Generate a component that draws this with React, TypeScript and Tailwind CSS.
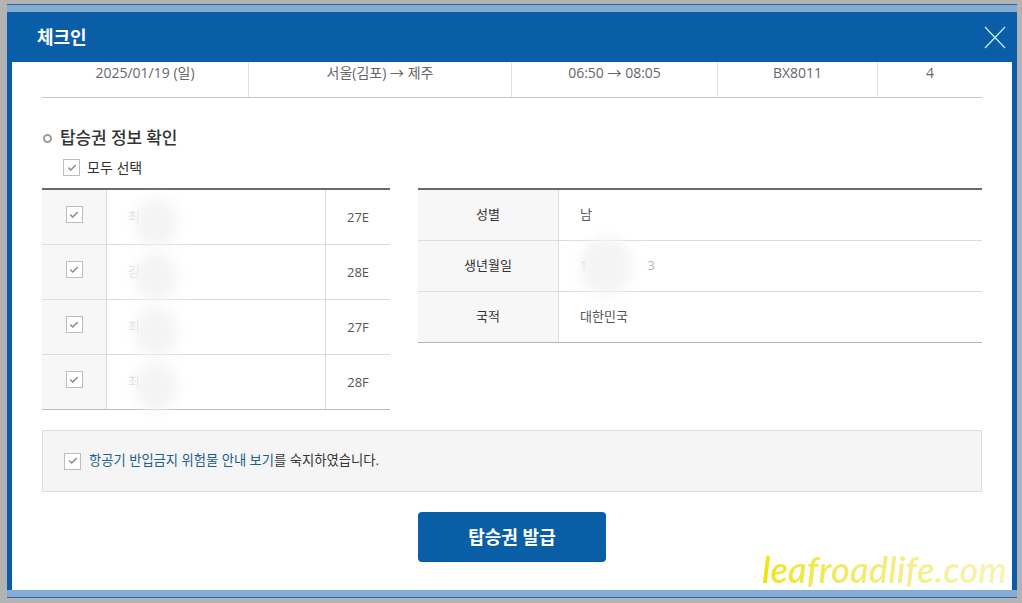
import { Check } from "lucide-react";

const font = { fontFamily: '"Open Sans", "Noto Sans CJK KR", sans-serif' };

interface Passenger {
  initial: string;
  seat: string;
}

const passengers: Passenger[] = [
  { initial: "최", seat: "27E" },
  { initial: "김", seat: "28E" },
  { initial: "최", seat: "27F" },
  { initial: "최", seat: "28F" },
];

function CheckBox() {
  return (
    <span className="flex h-[17px] w-[17px] shrink-0 items-center justify-center border border-[#bdbdbd] bg-white">
      <Check size={10} strokeWidth={3.6} className="text-[#8a8a8a]" />
    </span>
  );
}

function Blob({ className }: { className: string }) {
  // blurred cover over personal info
  return (
    <span
      aria-hidden="true"
      className={`pointer-events-none absolute rounded-full bg-[#f4f4f4] blur-[6px] ${className}`}
    />
  );
}

export default function App() {
  return (
    <div
      className="h-[603px] w-[1022px] overflow-hidden bg-[#b3b3b3] pl-[7px] pr-[5px] pt-[4px]"
      style={font}
    >
      <div className="flex flex-col border-t border-[#2a66a3]">
        <div className="h-[7px] bg-[#86acd4]" />
        <div className="bg-[#0a5ea7] px-[5px]">
          {/* header */}
          <div className="flex h-[50px] items-center justify-between pl-[25px] pr-[6px]">
            <h1 className="text-[18px] font-bold text-white">체크인</h1>
            <svg width="22" height="23" viewBox="0 0 22 23" className="mt-[1px]">
              <path d="M1 1 L21 22 M21 1 L1 22" stroke="#d6efff" strokeWidth="1.1" fill="none" />
            </svg>
          </div>

          {/* body */}
          <div className="relative h-[528px] bg-white px-[30px]">
            {/* flight row */}
            <div className="flex h-[36px] border-b border-[#c9c9c9] text-[14px] text-[#666]">
              <div className="w-[206px] text-center">2025/01/19 (일)</div>
              <div className="w-[263px] border-l border-[#e2e2e2] text-center">서울(김포) → 제주</div>
              <div className="w-[206px] border-l border-[#e2e2e2] text-center">06:50 → 08:05</div>
              <div className="w-[160px] border-l border-[#e2e2e2] text-center">BX8011</div>
              <div className="flex-1 border-l border-[#e2e2e2] text-center">4</div>
            </div>

            {/* section title */}
            <div className="mt-[30px] flex h-[20px] items-center gap-[8px] pl-[1px]">
              <span className="h-[9px] w-[9px] rounded-full border-[2.5px] border-[#9a9a9a]" />
              <span className="text-[17px] font-medium tracking-[-0.1px] text-[#333]">탑승권 정보 확인</span>
            </div>

            <div className="mt-[11px] flex h-[17px] items-center gap-[7px] pl-[21px]">
              <CheckBox />
              <span className="text-[14px] text-[#333]">모두 선택</span>
            </div>

            {/* tables */}
            <div className="mt-[12px] flex items-start gap-[28px]">
              <div className="w-[348px] border-t-2 border-[#656b73]">
                {passengers.map((p, i) => (
                  <div key={i} className="flex h-[55px] border-b border-[#dcdcdc] last:border-[#bcbcbc]">
                    <div className="flex w-[64px] justify-center bg-[#f7f7f8] pt-[16px]">
                      <CheckBox />
                    </div>
                    <div className="relative w-[220px] border-x border-[#dcdcdc] pl-[21px] pt-[17px] text-[13px] text-[#dadada]">
                      <span className="blur-[0.7px]">{p.initial}</span>
                      <Blob className="left-[28px] top-[8px] h-[48px] w-[42px]" />
                    </div>
                    <div className="flex flex-1 items-center justify-center pt-[2px] text-[13px] text-[#555]">
                      {p.seat}
                    </div>
                  </div>
                ))}
              </div>

              <div className="flex-1 border-t-2 border-[#656b73]">
                <div className="flex h-[51px] border-b border-[#dcdcdc]">
                  <div className="flex w-[141px] items-center justify-center border-r border-[#dcdcdc] bg-[#f7f7f8] text-[13px] text-[#333]">
                    성별
                  </div>
                  <div className="flex items-center pl-[21px] text-[13px] text-[#555]">남</div>
                </div>
                <div className="flex h-[51px] border-b border-[#dcdcdc]">
                  <div className="flex w-[141px] items-center justify-center border-r border-[#dcdcdc] bg-[#f7f7f8] text-[13px] text-[#333]">
                    생년월일
                  </div>
                  <div className="relative flex items-center pl-[21px] text-[13px] text-[#bbb]">
                    <span>1</span>
                    <span className="ml-[60px]">3</span>
                    <Blob className="left-[22px] top-[-4px] h-[58px] w-[50px]" />
                  </div>
                </div>
                <div className="flex h-[51px] border-b border-[#b5b5b5]">
                  <div className="flex w-[141px] items-center justify-center border-r border-[#dcdcdc] bg-[#f7f7f8] text-[13px] text-[#333]">
                    국적
                  </div>
                  <div className="flex items-center pl-[21px] text-[13px] text-[#555]">대한민국</div>
                </div>
              </div>
            </div>

            {/* notice */}
            <div className="mt-[20px] flex h-[62px] items-center gap-[8px] border border-[#dcdcdc] bg-[#f5f5f5] pl-[21px]">
              <CheckBox />
              <p className="text-[13.3px] text-[#333]">
                <span className="text-[#1b5f8e]">항공기 반입금지 위험물 안내 보기</span>를 숙지하였습니다.
              </p>
            </div>

            <div className="mt-[20px] flex justify-center">
              <button className="h-[50px] w-[188px] rounded-[4px] bg-[#0a5ea6] text-[18px] font-semibold text-white">
                탑승권 발급
              </button>
            </div>

            {/* watermark */}
            <span
              className="absolute bottom-[-3px] right-[5px] bg-gradient-to-r from-[#f0e400] to-[#f8f3b8] bg-clip-text text-[36px] font-semibold italic leading-[48px] tracking-[0.2px] text-transparent"
              style={{ fontFamily: 'Lato, sans-serif' }}
            >
              leafroadlife.com
            </span>
          </div>
        </div>
        <div className="h-[7px] bg-[#86acd4]" />
        <div className="h-px bg-[#2a66a3]" />
      </div>
    </div>
  );
}
